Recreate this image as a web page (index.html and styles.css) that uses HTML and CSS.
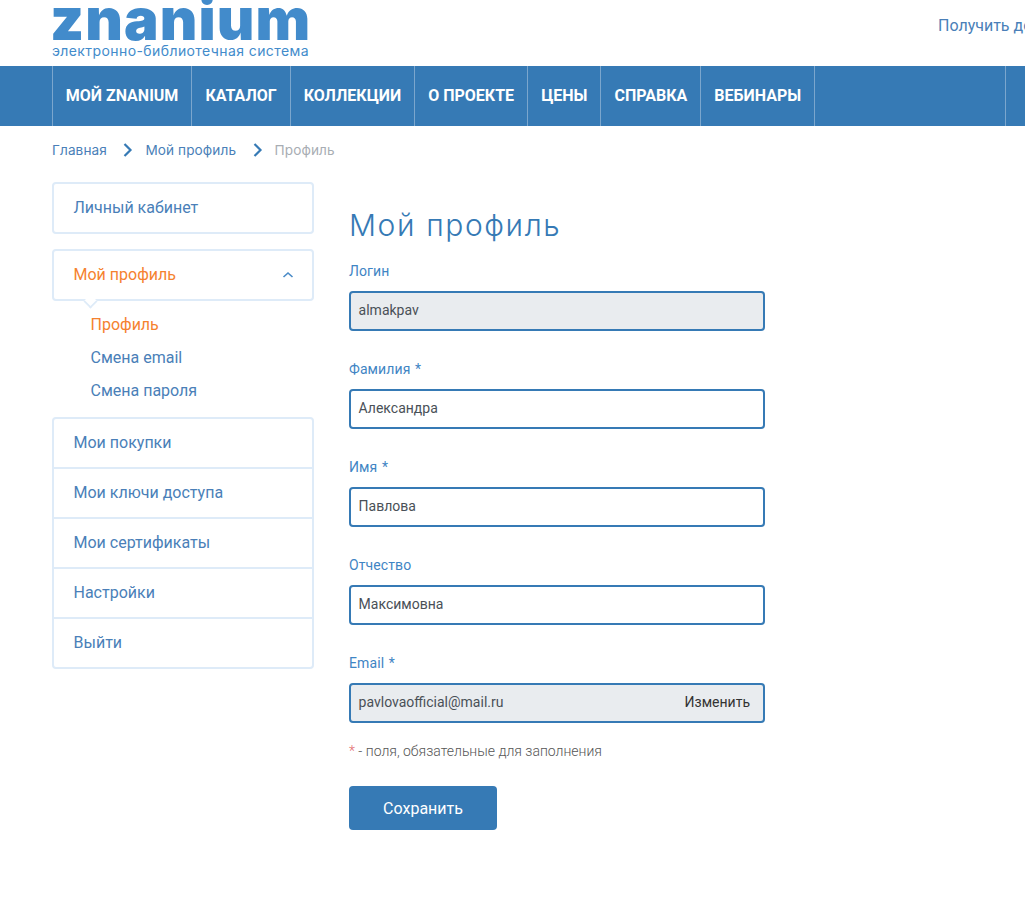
FILE: index.html
```html
<!DOCTYPE html>
<html lang="ru">
<head>
<meta charset="utf-8">
<title>Мой профиль</title>
<link rel="stylesheet" href="styles.css">
</head>
<body>
<header class="top">
  <a class="logo">
    <span class="logo-name">znanium</span>
    <span class="logo-sub">электронно-библиотечная система</span>
  </a>
  <a class="top-link">Получить доступ</a>
</header>
<nav class="nav">
  <a class="nav-item">МОЙ ZNANIUM</a>
  <a class="nav-item">КАТАЛОГ</a>
  <a class="nav-item">КОЛЛЕКЦИИ</a>
  <a class="nav-item">О ПРОЕКТЕ</a>
  <a class="nav-item">ЦЕНЫ</a>
  <a class="nav-item">СПРАВКА</a>
  <a class="nav-item">ВЕБИНАРЫ</a>
  <span class="nav-spacer"></span>
</nav>
<div class="crumbs">
  <a class="crumb">Главная</a>
  <svg class="crumb-sep" width="10" height="14" viewBox="0 0 10 14"><path d="M1.500 1 7.500 7l-6 6" fill="none" stroke="#367ab5" stroke-width="2.200"/></svg>
  <a class="crumb">Мой профиль</a>
  <svg class="crumb-sep" width="10" height="14" viewBox="0 0 10 14"><path d="M1.500 1 7.500 7l-6 6" fill="none" stroke="#367ab5" stroke-width="2.200"/></svg>
  <span class="crumb crumb-current">Профиль</span>
</div>
<div class="page">
  <aside class="side">
    <div class="side-box"><a class="side-row">Личный кабинет</a></div>
    <div class="side-box side-box-open">
      <a class="side-row side-active">Мой профиль
        <svg class="side-chevron" width="12" height="8" viewBox="0 0 12 8"><path d="M1.500 6 6 2l4.500 4" fill="none" stroke="#4a8bc7" stroke-width="1.600"/></svg>
      </a>
      <span class="side-tail"></span>
    </div>
    <ul class="side-sub">
      <li class="side-active">Профиль</li>
      <li>Смена email</li>
      <li>Смена пароля</li>
    </ul>
    <div class="side-box">
      <a class="side-row">Мои покупки</a>
      <a class="side-row">Мои ключи доступа</a>
      <a class="side-row">Мои сертификаты</a>
      <a class="side-row">Настройки</a>
      <a class="side-row">Выйти</a>
    </div>
  </aside>
  <main class="main">
    <h1 class="title">Мой профиль</h1>
    <form class="form">
      <div class="field">
        <label class="label">Логин</label>
        <div class="input input-off">almakpav</div>
      </div>
      <div class="field">
        <label class="label">Фамилия <span class="req">*</span></label>
        <div class="input">Александра</div>
      </div>
      <div class="field">
        <label class="label">Имя <span class="req">*</span></label>
        <div class="input">Павлова</div>
      </div>
      <div class="field">
        <label class="label">Отчество</label>
        <div class="input">Максимовна</div>
      </div>
      <div class="field">
        <label class="label">Email <span class="req">*</span></label>
        <div class="input input-off"><span>pavlovaofficial@mail.ru</span><a class="change">Изменить</a></div>
      </div>
      <p class="note"><span class="star">*</span> - поля, обязательные для заполнения</p>
      <button class="save" type="button">Сохранить</button>
    </form>
  </main>
</div>
</body>
</html>
```
FILE: styles.css
```css
* { box-sizing: border-box; }
html, body { margin: 0; padding: 0; overflow: hidden; height: 899px; }
body { font-family: Roboto, "Liberation Sans", sans-serif; background: #fff; color: #3a3f44; }

.top { height: 66px; padding-left: 52px; display: flex; position: relative; overflow: hidden; }
.logo { display: flex; flex-direction: column; width: 258px; color: #428bcb; }
.logo-name { font-family: Inter, sans-serif; font-weight: 900; font-size: 58px; line-height: 46px; letter-spacing: 1.100px; height: 41px; margin-top: -4px; margin-left: -2px; white-space: nowrap; }
.logo-sub { font-family: Inter, sans-serif; font-size: 14px; line-height: 16px; font-weight: 400; margin-top: 6px; white-space: nowrap; letter-spacing: 0.41px; }
.top-link { margin-left: 628px; margin-top: 16px; font-size: 16px; line-height: 19px; color: #4a7fb8; white-space: nowrap; }

.nav { height: 60px; background: #367ab5; display: flex; padding-left: 51.75px; }
.nav-item { border-left: 1px solid #7ba6cd; padding: 0 13px; font-weight: 700; font-size: 16px; line-height: 60px; color: #fff; white-space: nowrap; }
.nav-spacer { border-left: 1px solid #7ba6cd; border-right: 1px solid #7ba6cd; width: 192px; }

.crumbs { height: 56px; padding: 0 0 8px 52px; display: flex; align-items: center; font-family: Inter, sans-serif; font-size: 13.600px; letter-spacing: 0.1px; color: #4a7fb8; }
.crumb-sep { margin: 0 12px 0 16.500px; }
.crumb-current { color: #a8adb3; }

.page { display: flex; padding-left: 52px; }
.side { width: 262px; flex: none; }
.side-box { border: 2px solid #deebf8; border-radius: 4px; position: relative; background: #fff; margin-bottom: 15px; }
.side-box-open { margin-bottom: 0; }
.side-row { display: flex; align-items: center; justify-content: space-between; height: 50px; padding: 0 18px 2px 19.500px; font-size: 16px; color: #4a7fb8; border-top: 2px solid #deebf8; }
.side-box > .side-row { height: 50px; }
.side-box > .side-row:first-child { border-top: 0; height: 48px; }
.side-active { color: #f5822f; }
.side-chevron { margin-top: 2px; }
.side-tail { position: absolute; left: 31px; bottom: -8px; width: 11px; height: 11px; background: #fff; border-right: 2px solid #deebf8; border-bottom: 2px solid #deebf8; transform: rotate(45deg) scale(.9); }
.side-sub { list-style: none; margin: 0; padding: 7px 0 10px 38.500px; font-size: 16px; }
.side-sub li { height: 33px; line-height: 33px; color: #4a7fb8; }
.side-sub li.side-active { color: #f5822f; }

.main { width: 416px; margin-left: 35px; flex: none; }
.title { font-family: Inter, sans-serif; font-weight: 300; font-size: 30px; line-height: 36px; margin: 25px 0 0; color: #367ab5; letter-spacing: 1.600px; }
.form { display: block; }
.field { height: 98px; }
.field:first-child { margin-top: 19px; }
.label { display: block; height: 29px; font-size: 14px; line-height: 18px; color: #3f85c4; letter-spacing: 0.1px; }
.req { margin-left: 1px; }
.input { height: 40px; border: 2px solid #367ab5; border-radius: 4px; background: #fff; display: flex; align-items: center; justify-content: space-between; padding: 0 13px 2px 7.600px; font-size: 14px; color: #495057; }
.input-off { background: #e9ecef; }
.change { color: #333; }
.note { margin: -10px 0 0; font-size: 14px; font-weight: 300; line-height: 18px; color: #555; }
.star { color: #e26a6a; }
.save { display: block; width: 148px; height: 44px; margin-top: 26px; border: 0; border-radius: 4px; background: #367ab5; color: #fff; font-family: inherit; font-size: 16px; }
```
